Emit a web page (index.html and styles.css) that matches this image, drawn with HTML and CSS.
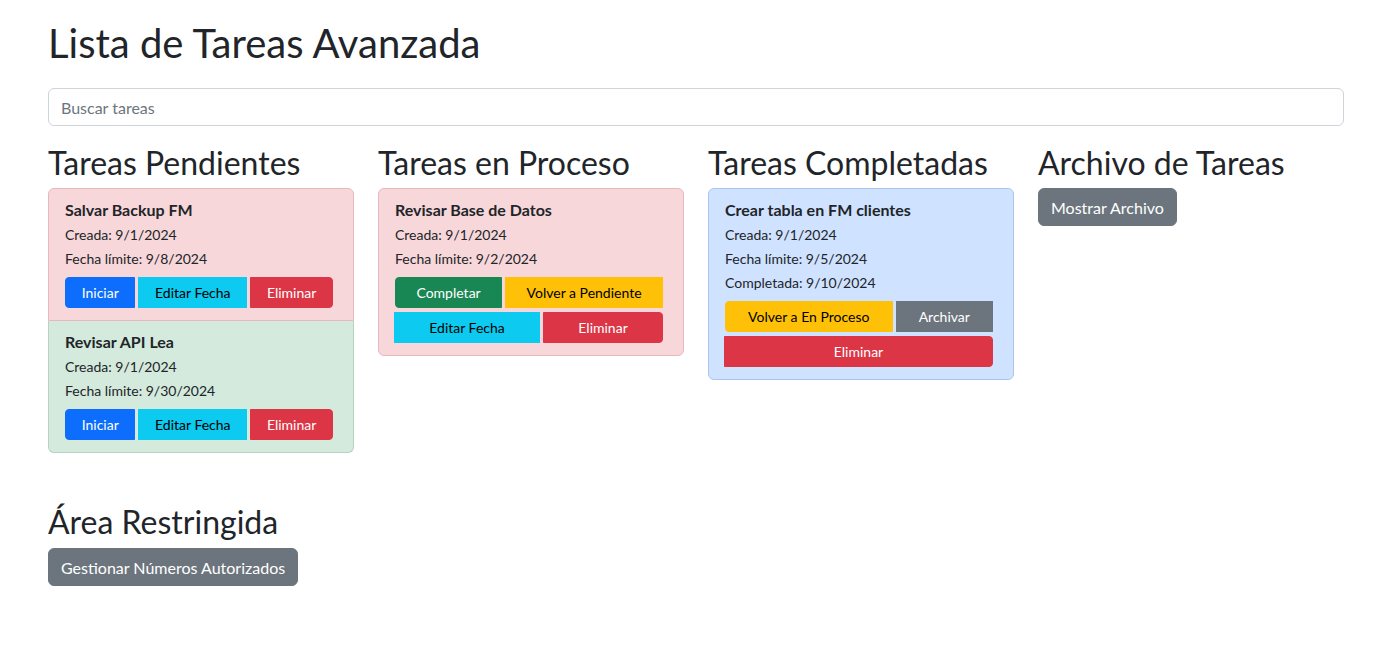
FILE: index.html
```html
<!DOCTYPE html>
<html lang="es">
<head>
<meta charset="utf-8">
<title>Lista de Tareas Avanzada</title>
<link rel="stylesheet" href="styles.css">
</head>
<body>
<div class="container">
  <h1 class="title">Lista de Tareas Avanzada</h1>
  <input class="search" type="text" placeholder="Buscar tareas">
  <div class="board">
    <section class="column">
      <h2 class="col-title">Tareas Pendientes</h2>
      <div class="list">
        <div class="item item-danger">
          <div class="task-name">Salvar Backup FM</div>
          <div class="meta">Creada: 9/1/2024</div>
          <div class="meta">Fecha límite: 9/8/2024</div>
          <div class="btn-group">
            <button class="btn btn-primary">Iniciar</button>
            <button class="btn btn-info">Editar Fecha</button>
            <button class="btn btn-danger">Eliminar</button>
          </div>
        </div>
        <div class="item item-success">
          <div class="task-name">Revisar API Lea</div>
          <div class="meta">Creada: 9/1/2024</div>
          <div class="meta">Fecha límite: 9/30/2024</div>
          <div class="btn-group">
            <button class="btn btn-primary">Iniciar</button>
            <button class="btn btn-info">Editar Fecha</button>
            <button class="btn btn-danger">Eliminar</button>
          </div>
        </div>
      </div>
    </section>
    <section class="column">
      <h2 class="col-title">Tareas en Proceso</h2>
      <div class="list">
        <div class="item item-danger">
          <div class="task-name">Revisar Base de Datos</div>
          <div class="meta">Creada: 9/1/2024</div>
          <div class="meta">Fecha límite: 9/2/2024</div>
          <div class="btn-group">
            <button class="btn btn-success">Completar</button>
            <button class="btn btn-warning">Volver a Pendiente</button>
            <button class="btn btn-info">Editar Fecha</button>
            <button class="btn btn-danger">Eliminar</button>
          </div>
        </div>
      </div>
    </section>
    <section class="column">
      <h2 class="col-title">Tareas Completadas</h2>
      <div class="list">
        <div class="item item-primary">
          <div class="task-name">Crear tabla en FM clientes</div>
          <div class="meta">Creada: 9/1/2024</div>
          <div class="meta">Fecha límite: 9/5/2024</div>
          <div class="meta">Completada: 9/10/2024</div>
          <div class="btn-group">
            <button class="btn btn-warning">Volver a En Proceso</button>
            <button class="btn btn-secondary">Archivar</button>
            <button class="btn btn-danger btn-full">Eliminar</button>
          </div>
        </div>
      </div>
    </section>
    <section class="column">
      <h2 class="col-title">Archivo de Tareas</h2>
      <button class="btn-lg-secondary">Mostrar Archivo</button>
    </section>
  </div>
  <section class="restricted">
    <h2 class="col-title">Área Restringida</h2>
    <button class="btn-lg-secondary">Gestionar Números Autorizados</button>
  </section>
</div>
</body>
</html>
```

FILE: styles.css
```css
* { box-sizing: border-box; }

body {
  margin: 0;
  font-family: Lato, "Open Sans", sans-serif;
  color: #212529;
  background: #fff;
}

.container {
  width: 1296px;
  margin-left: 48px;
  padding-top: 16px;
}

.title {
  font-size: 40px;
  line-height: 42px;
  padding-top: 6px;
  font-weight: 400;
  margin: 0 0 24px;
}

.search {
  display: block;
  width: 100%;
  height: 38px;
  padding: 6px 12px;
  font-family: inherit;
  font-size: 16px;
  color: #212529;
  border: 1px solid #ced4da;
  border-radius: 6px;
  margin: 0 0 16px;
}
.search::placeholder { color: #6c757d; }

.board {
  display: grid;
  grid-template-columns: repeat(4, 306px);
  column-gap: 24px;
  align-items: start;
}

.col-title {
  font-size: 32px;
  line-height: 34.4px;
  padding-top: 4px;
  font-weight: 400;
  margin: 0 0 8px;
}

.list {
  display: flex;
  flex-direction: column;
}

.item {
  padding: 8px 16px;
  border: 1px solid;
}
.item + .item { border-top-width: 0; }
.item:first-child { border-top-left-radius: 6px; border-top-right-radius: 6px; }
.item:last-child { border-bottom-left-radius: 6px; border-bottom-right-radius: 6px; }

.item-danger { background: #f8d7da; border-color: #e5b9bd; }
.item-success { background: #d4eadc; border-color: #b5d2c2; }
.item-primary { background: #cfe2ff; border-color: #a9c6ec; }

.task-name {
  font-size: 16px;
  font-weight: 700;
  line-height: 22px;
  padding-top: 2px;
}

.meta {
  font-size: 14px;
  line-height: 20px;
  padding-top: 4px;
}

.btn-group {
  display: flex;
  flex-wrap: wrap;
  margin-top: 8px;
}

.btn {
  flex: 1 1 auto;
  font-family: inherit;
  font-size: 14px;
  line-height: 21px;
  padding: 4px 8px;
  border: 1px solid transparent;
  border-radius: 0;
  margin: 0 4px 4px 0;
  cursor: pointer;
}
.btn + .btn { margin-left: -1px; }
.btn:first-child { border-top-left-radius: 4px; border-bottom-left-radius: 4px; }
.btn:last-child { border-top-right-radius: 4px; border-bottom-right-radius: 4px; }
.btn-full { width: 100%; }

.btn-primary { background: #0d6efd; border-color: #0d6efd; color: #fff; }
.btn-info { background: #0dcaf0; border-color: #0dcaf0; color: #000; }
.btn-danger { background: #dc3545; border-color: #dc3545; color: #fff; }
.btn-success { background: #198754; border-color: #198754; color: #fff; }
.btn-warning { background: #ffc107; border-color: #ffc107; color: #000; }
.btn-secondary { background: #6c757d; border-color: #6c757d; color: #fff; }

.btn-lg-secondary {
  display: inline-block;
  font-family: inherit;
  font-size: 16px;
  line-height: 24px;
  padding: 7px 12px 5px;
  border: 1px solid #6c757d;
  border-radius: 6px;
  background: #6c757d;
  color: #fff;
  cursor: pointer;
}

.restricted {
  margin-top: 48px;
}
```
